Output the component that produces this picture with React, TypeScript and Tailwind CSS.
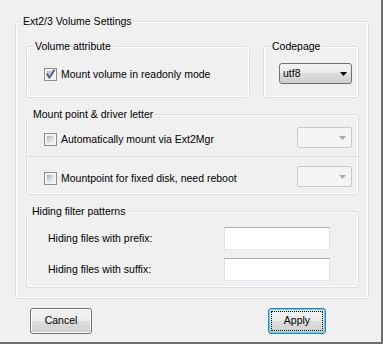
import type { ReactNode } from "react";

function Group({
  title,
  titleLeft,
  className,
  children,
}: {
  title: string;
  titleLeft: string;
  className: string;
  children: ReactNode;
}) {
  return (
    <div className={`relative rounded-[3px] border border-[#d5dfe5] shadow-[inset_0_0_0_1px_#ffffff] ${className}`}>
      <span className={`absolute -top-[7px] bg-[#f0f0f0] px-[2px] leading-[13px] whitespace-nowrap ${titleLeft}`}>
        {title}
      </span>
      {children}
    </div>
  );
}

function CheckBox({ checked }: { checked?: boolean }) {
  return (
    <span className="relative flex h-[13px] w-[13px] shrink-0 border border-[#8e8f8f] bg-[#f4f4f4] p-[2px]">
      <span className="h-full w-full bg-linear-to-br from-[#aeb3b9] via-[#d8dadd] to-[#f4f4f5]" />
      {checked && (
        <svg className="absolute left-0 top-0" width="11" height="11" viewBox="0 0 11 11">
          <path d="M2.2 5.2 L4.4 8.6 L9 1.6" fill="none" stroke="#4a5f97" strokeWidth="1.9" strokeLinecap="square" />
        </svg>
      )}
    </span>
  );
}

function Arrow({ color }: { color: string }) {
  return (
    <svg width="7" height="4" viewBox="0 0 7 4">
      <polygon points="0,0 7,0 3.5,4" fill={color} />
    </svg>
  );
}

function DisabledDrop() {
  return (
    <div className="flex h-[21px] w-[55px] items-center justify-end rounded-[2px] border border-[#c6c9cc] bg-[#f4f4f4] pr-[5px]">
      <Arrow color="#a8a8a8" />
    </div>
  );
}

export default function App() {
  return (
    <div className="h-[344px] w-[383px] border-b-2 border-r-2 border-[#6f6f6f] bg-[#f0f0f0] pl-[15px] pt-[21px] font-['Liberation_Sans',Arial,sans-serif] text-[10.5px] text-black">
      {/* Main settings frame */}
      <Group
        title="Ext2/3 Volume Settings"
        titleLeft="left-[5px]"
        className="flex h-[278px] w-[354px] flex-col pl-[10px] pr-[9px] pt-[24px]"
      >
        <div className="flex gap-[13px]">
          <Group title="Volume attribute" titleLeft="left-[6px]" className="h-[52px] w-[224px] pl-[17px] pt-[21px]">
            <div className="flex items-center gap-[4px]">
              <CheckBox checked />
              <span className="leading-[13px]">Mount volume in readonly mode</span>
            </div>
          </Group>
          <Group title="Codepage" titleLeft="left-[6px]" className="h-[52px] w-[96px] pl-[15px] pt-[16px]">
            <div className="flex h-[21px] w-[73px] items-center justify-between rounded-[3px] border border-[#707070] bg-[linear-gradient(#f2f2f2_0%,#ebebeb_50%,#dddddd_50%,#cfcfcf_100%)] pl-[3px] pr-[4px]">
              <span>utf8</span>
              <Arrow color="#000000" />
            </div>
          </Group>
        </div>

        <Group title="Mount point & driver letter" titleLeft="left-[4px]" className="mt-[16px] h-[81px]">
          <div className="flex items-center justify-between border-b border-[#d5dfe5] pb-[8px] pl-[17px] pr-[6px] pt-[12px]">
            <div className="mt-[3px] flex items-center gap-[4px]">
              <CheckBox />
              <span className="leading-[13px]">Automatically mount via Ext2Mgr</span>
            </div>
            <DisabledDrop />
          </div>
          <div className="flex items-center justify-between pb-[7px] pl-[17px] pr-[6px] pt-[9px]">
            <div className="mt-[3px] flex items-center gap-[4px]">
              <CheckBox />
              <span className="leading-[13px]">Mountpoint for fixed disk, need reboot</span>
            </div>
            <DisabledDrop />
          </div>
        </Group>

        <Group
          title="Hiding filter patterns"
          titleLeft="left-[3px]"
          className="mt-[16px] flex h-[77px] flex-col gap-[8px] pl-[21px] pr-[28px] pt-[15px]"
        >
          <div className="flex items-center justify-between">
            <span>Hiding files with prefix:</span>
            <div className="h-[23px] w-[106px] border border-b-[#e3e9ef] border-x-[#dbdfe6] border-t-[#abadb3] bg-white" />
          </div>
          <div className="flex items-center justify-between">
            <span>Hiding files with suffix:</span>
            <div className="h-[23px] w-[106px] border border-b-[#e3e9ef] border-x-[#dbdfe6] border-t-[#abadb3] bg-white" />
          </div>
        </Group>
      </Group>

      {/* Buttons */}
      <div className="ml-[15px] mt-[9px] flex gap-[176px]">
        <button className="flex h-[26px] w-[62px] items-center justify-center rounded-[3px] border border-[#707070] bg-[linear-gradient(#f2f2f2_0%,#ebebeb_50%,#dddddd_50%,#cfcfcf_100%)] shadow-[inset_0_0_0_1px_#fcfcfc]">
          Cancel
        </button>
        <button className="relative flex h-[26px] w-[58px] items-center justify-center rounded-[3px] border border-[#3c7fb1] bg-[linear-gradient(#f2f2f2_0%,#ebebeb_50%,#dddddd_50%,#cfcfcf_100%)] shadow-[inset_0_0_0_1px_#48d8fb]">
          <span className="absolute inset-[2px] border border-dotted border-black" />
          Apply
        </button>
      </div>
    </div>
  );
}
